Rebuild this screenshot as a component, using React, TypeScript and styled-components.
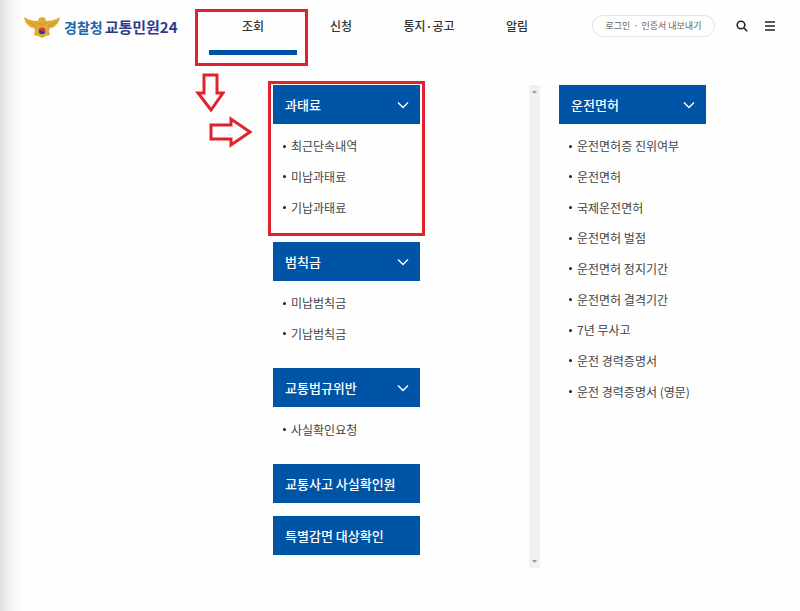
import React from 'react';
import styled, { createGlobalStyle, css } from 'styled-components';

const RED = '#e0222c';
const BLUE = '#0054a6';

const GlobalStyle = createGlobalStyle`
  *, *::before, *::after { box-sizing: border-box; }
  body {
    margin: 0;
    font-family: "Noto Sans CJK KR", "Noto Sans", sans-serif;
    color: #333;
    background: #fff;
  }
  ul { margin: 0; padding: 0; list-style: none; }
  a { color: inherit; text-decoration: none; }
  button { border: 0; padding: 0; background: none; font: inherit; color: inherit; cursor: pointer; }
`;

const Page = styled.div`
  min-height: 100vh;
  background: linear-gradient(to right, #e0e0e0 0, #f0f0f0 8px, #fafafa 16px, #fefefe 24px, #fefefe 100%);
`;

const Header = styled.header`
  display: flex;
  align-items: flex-start;
  height: 85px;
  padding: 0 24px;
`;

const Logo = styled.a`
  display: flex;
  align-items: center;
  flex: 0 0 185px;
  height: 54px;
  font-size: 15px;
  font-weight: 700;
  line-height: 20px;
  color: #2f3a8c;
  white-space: nowrap;
`;

const Emblem = styled.svg`
  width: 36px;
  height: 24px;
  margin-right: 4px;
`;

const Agency = styled.span`
  margin-right: 2px;
  font-size: 14px;
  color: #1b66ad;
`;

const Nav = styled.nav`
  display: flex;
  flex: 0 0 auto;
`;

const NavLink = styled.a<{ $active?: boolean }>`
  position: relative;
  width: 88px;
  height: 55px;
  border-bottom: 5px solid ${(p) => (p.$active ? BLUE : 'transparent')};
  font-size: 12px;
  font-weight: 500;
  line-height: 52px;
  text-align: center;
`;

const Highlight = styled.span<{ $nav?: boolean }>`
  position: absolute;
  border: 3px solid ${RED};
  pointer-events: none;
  ${(p) =>
    p.$nav
      ? css`inset: 9px -11px -16px -14px;`
      : css`inset: -4px -5px 6px -5px;`}
`;

const Arrow = styled.svg<{ $dir: 'down' | 'right' }>`
  position: absolute;
  fill: none;
  stroke: ${RED};
  stroke-width: 3;
  ${(p) =>
    p.$dir === 'down'
      ? css`top: 73px; left: -14px; width: 30px; height: 40px;`
      : css`top: 116px; left: 0; width: 44px; height: 32px;`}
`;

const Tools = styled.div`
  display: flex;
  align-items: center;
  height: 52px;
  margin-left: auto;
`;

const Account = styled.div`
  display: flex;
  align-items: center;
  justify-content: center;
  gap: 3px;
  width: 123px;
  height: 22px;
  margin-right: 21px;
  border: 1px solid #e3e3e5;
  border-radius: 11px;
  font-size: 9px;
  line-height: 18px;
  color: #666;
  white-space: nowrap;
`;

const IconButton = styled.button`
  display: flex;
  width: 12px;
  height: 12px;
  margin-right: 16px;
  &:last-child { margin-right: 0; }
  svg { width: 12px; height: 12px; fill: none; stroke: #222; stroke-width: 1.6; }
`;

const Menu = styled.main`
  display: grid;
  grid-template-columns: 256px 11px 147px;
  column-gap: 0;
  justify-content: start;
  padding: 0 24px 43px 273px;
`;

const Track = styled.div`
  display: flex;
  flex-direction: column;
  justify-content: space-between;
  align-items: center;
  height: 483px;
  padding: 4px 0;
  background: #f1f1f1;
  svg { width: 5px; height: 4px; fill: #999; }
`;

const Column = styled.div<{ $before?: number; $after?: number }>`
  display: flex;
  flex-direction: column;
  width: 147px;
  margin-left: ${(p) => p.$before ?? 0}px;
`;

const Section = styled.section`
  position: relative;
`;

const Heading = styled.button<{ $single?: boolean }>`
  display: flex;
  align-items: center;
  justify-content: space-between;
  width: 100%;
  height: 39px;
  margin-bottom: ${(p) => (p.$single ? 13 : 0)}px;
  padding: 0 11px 0 12px;
  background: ${BLUE};
  color: #fff;
  font-size: 13px;
  font-weight: 500;
  line-height: 20px;
  white-space: nowrap;
  svg { width: 12px; height: 8px; fill: none; stroke: #fff; stroke-width: 1.4; }
`;

const List = styled.ul<{ $height: number }>`
  display: grid;
  grid-auto-rows: 1fr;
  align-items: center;
  min-height: ${(p) => p.$height}px;
  margin: 7px 0 19px;
`;

const Item = styled.li`
  display: flex;
  align-items: center;
  padding-left: 10px;
  font-size: 12px;
  line-height: 18px;
  color: #444;
  white-space: nowrap;
  &::before {
    content: "";
    width: 3px;
    height: 3px;
    margin-right: 5px;
    border-radius: 50%;
    background: #222;
  }
`;

interface GroupProps {
  title: string;
  items: string[];
  height: number;
  marked?: boolean;
}

function Group({ title, items, height, marked }: GroupProps) {
  return (
    <Section>
      <Heading type="button" aria-expanded="true">
        {title}
        <svg viewBox="0 0 12 8" aria-hidden="true"><path d="M1 1.5 6 6.5 11 1.5" /></svg>
      </Heading>
      <List $height={height}>
        {items.map((item) => (
          <Item key={item}><a href="#">{item}</a></Item>
        ))}
      </List>
      {marked && <Highlight />}
    </Section>
  );
}

export default function App() {
  return (
    <Page>
      <GlobalStyle />
      <Header>
        <Logo href="#">
          <Emblem viewBox="0 0 36 24" aria-hidden="true">
            <path d="M0 2Q6 6 14 6L15 3 18 2 21 3 22 6Q30 6 36 2Q35 8 32 10Q30 13 26 13L25 16 26 20 22 21 18 23 14 21 10 20 11 16 10 13Q6 13 4 10Q1 8 0 2Z" fill="#e0aa35" />
            <path d="M4 7 12 11M32 7 24 11M13 8 18 10 23 8" fill="none" stroke="#c98f2a" strokeWidth="0.8" />
            <circle cx="18" cy="16" r="3.2" fill="#263e91" />
            <path d="M14.8 16a3.2 3.2 0 0 1 6.4 0q-1.6 1.5-3.2 0t-3.2 0" fill="#d93532" />
          </Emblem>
          <Agency>경찰청</Agency>
          교통민원24
        </Logo>
        <Nav>
          <NavLink href="#" $active>
            조회
            <Highlight $nav />
            <Arrow $dir="down" viewBox="0 0 30 40" aria-hidden="true"><path d="M9 2H22V20H28L16 37 3 20H9Z" /></Arrow>
            <Arrow $dir="right" viewBox="0 0 44 32" aria-hidden="true"><path d="M2 9H22V3L41 16 22 29V23H2Z" /></Arrow>
          </NavLink>
          <NavLink href="#">신청</NavLink>
          <NavLink href="#">통지·공고</NavLink>
          <NavLink href="#">알림</NavLink>
        </Nav>
        <Tools>
          <Account>
            <a href="#">로그인</a>
            <span>·</span>
            <a href="#">인증서 내보내기</a>
          </Account>
          <IconButton type="button" aria-label="검색">
            <svg viewBox="0 0 12 12"><circle cx="5" cy="5" r="3.8" /><path d="m8 8 3.2 3.2" /></svg>
          </IconButton>
          <IconButton type="button" aria-label="전체 메뉴">
            <svg viewBox="0 0 12 12"><path d="M1 2h10M1 6h10M1 10h10" /></svg>
          </IconButton>
        </Tools>
      </Header>
      <Menu>
        <Column>
          <Group title="과태료" items={['최근단속내역', '미납과태료', '기납과태료']} height={92} marked />
          <Group title="범칙금" items={['미납범칙금', '기납범칙금']} height={61} />
          <Group title="교통법규위반" items={['사실확인요청']} height={31} />
          <Heading type="button" $single>교통사고 사실확인원</Heading>
          <Heading type="button" $single>특별감면 대상확인</Heading>
        </Column>
        <Track aria-hidden="true">
          <svg viewBox="0 0 5 4"><path d="M0 4 2.5 1 5 4Z" /></svg>
          <svg viewBox="0 0 5 4"><path d="M0 0 2.5 3 5 0Z" /></svg>
        </Track>
        <Column $before={19}>
          <Group
            title="운전면허"
            height={276}
            items={['운전면허증 진위여부', '운전면허', '국제운전면허', '운전면허 벌점', '운전면허 정지기간', '운전면허 결격기간', '7년 무사고', '운전 경력증명서', '운전 경력증명서 (영문)']}
          />
        </Column>
      </Menu>
    </Page>
  );
}
